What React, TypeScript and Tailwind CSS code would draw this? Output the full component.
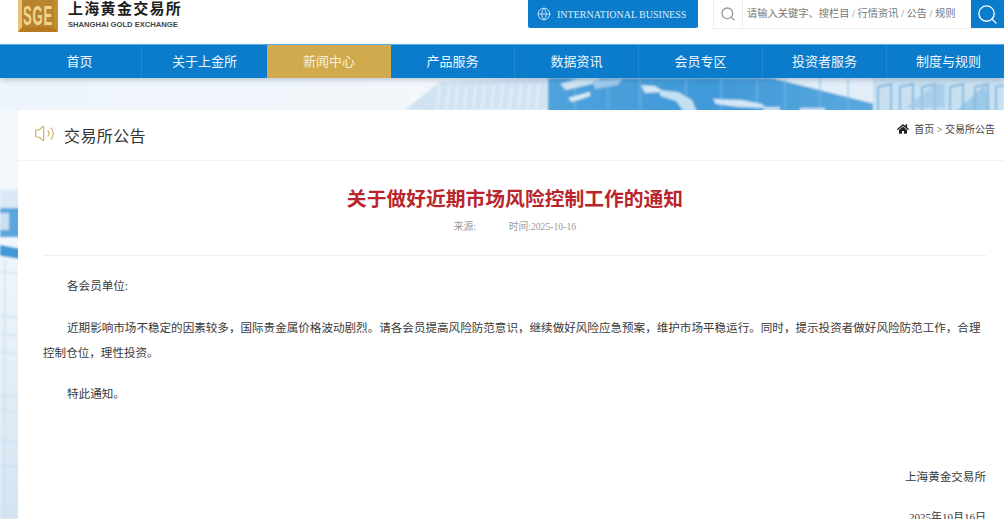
import { Globe, Search, Volume2 } from "lucide-react";
import { FaHome } from "react-icons/fa";

const navItems = ["首页", "关于上金所", "新闻中心", "产品服务", "数据资讯", "会员专区", "投资者服务", "制度与规则"];
const serif = "font-['Liberation_Serif','Noto_Sans_CJK_SC',serif]";
const bodyText =
  "近期影响市场不稳定的因素较多\uFF0C国际贵金属价格波动剧烈\u3002请各会员提高风险防范意识\uFF0C继续做好风险应急预案\uFF0C维护市场平稳运行\u3002同时\uFF0C提示投资者做好风险防范工作\uFF0C合理控制仓位\uFF0C理性投资\u3002";

function Backdrop() {
  const facade = [];
  for (let x = 440; x < 548; x += 9) facade.push(<line key={`v${x}`} x1={x} y1={85} x2={x - 3} y2={110} stroke="#e4f0f9" strokeWidth="2" />);
  for (let y = 84; y < 110; y += 6) facade.push(<line key={`h${y}`} x1={425} y1={y + 3} x2={548} y2={y} stroke="#dbe9f5" strokeWidth="1" />);
  const mullions = [575, 608, 640, 686, 721, 757, 785, 820, 848];
  const frames = [878, 900, 922, 950, 975, 996];
  return (
    <svg className="absolute inset-0" width="1004" height="519" viewBox="0 0 1004 519" aria-hidden="true">
      <defs>
        <linearGradient id="pg" x1="0" x2="1" y1="0" y2="0">
          <stop offset="0" stopColor="#edf4fb" />
          <stop offset="0.42" stopColor="#f3f7fc" />
          <stop offset="1" stopColor="#e6f0f8" />
        </linearGradient>
        <linearGradient id="glass" x1="0" x2="1" y1="0" y2="0">
          <stop offset="0" stopColor="#4fa3dc" />
          <stop offset="0.5" stopColor="#3f99d8" />
          <stop offset="1" stopColor="#5ba9de" />
        </linearGradient>
        <linearGradient id="side" x1="0" x2="0" y1="0" y2="1">
          <stop offset="0" stopColor="#f0f6fb" />
          <stop offset="1" stopColor="#d3e4f2" />
        </linearGradient>
        <filter id="soft" x="-2%" y="-10%" width="104%" height="120%">
          <feGaussianBlur stdDeviation="0.8" />
        </filter>
      </defs>
      <rect width="1004" height="519" fill="#eef4fb" />
      <rect y="78" width="1004" height="32" fill="url(#pg)" />
      <g filter="url(#soft)">
        <polygon points="405,110 440,82 548,78 548,110" fill="#cfe2f2" />
        {facade}
        <rect x="548" y="78" width="325" height="34" fill="url(#glass)" />
        <polygon points="764,76 875,76 875,104" fill="#e3eff8" />
        {mullions.map((x) => (
          <line key={x} x1={x} y1={78} x2={x} y2={112} stroke="#7dbde7" strokeWidth="1" />
        ))}
        <polygon points="560,84 578,79 600,78 596,83 566,90" fill="#cfe5f5" />
        <polygon points="592,80 622,79 618,85 595,89" fill="#9fcbeb" />
        <polygon points="568,98 590,92 590,96 572,102" fill="#dcecf8" />
        <polygon points="641,85 655,86 664,92 645,93" fill="#d3e7f6" />
        <polygon points="660,90 678,92 692,100 697,112 684,112 676,101 660,96" fill="#c3dff3" />
        <polygon points="713,99 742,100 762,104 766,108 738,107 716,104" fill="#d3e7f6" />
        <rect x="764" y="107" width="16" height="5" fill="#c3dff3" />
        <rect x="800" y="108" width="25" height="4" fill="#c9e2f4" />
        <rect x="873" y="78" width="131" height="34" fill="#c9e0f1" />
        {frames.map((x) => (
          <path key={x} d={`M${x} 112V87l13-3v28`} fill="none" stroke="#4f9fd6" strokeWidth="1.5" opacity="0.8" />
        ))}
        <polygon points="905,108 935,84 945,84 945,108" fill="#9cc8e8" opacity="0.7" />
        <polygon points="955,112 985,85 990,112" fill="#7fb9e2" opacity="0.6" />
      </g>
      <rect y="110" width="18" height="409" fill="#f2f7fc" />
      <g filter="url(#soft)">
        <rect y="190" width="20" height="18" fill="#dbe9f6" />
        <rect y="208" width="20" height="29" fill="#5aa6dd" />
        <rect y="213" width="9" height="17" fill="#c9e0f2" />
        <polygon points="0,245 20,249 20,259 0,256" fill="#419ad7" />
        <polygon points="0,256 20,260 20,519 0,519" fill="url(#side)" />
        <line x1="5" y1="260" x2="5" y2="519" stroke="#c9deef" strokeWidth="1.2" />
        {[272, 316, 334, 352, 395, 410, 440, 465].map((y) => (
          <line key={y} x1="0" y1={y} x2="20" y2={y + 2} stroke="#c5dbec" strokeWidth="1" />
        ))}
      </g>
    </svg>
  );
}

function Logo() {
  return (
    <svg width="40" height="32" viewBox="0 0 40 32" className="shrink-0" aria-label="SGE">
      <rect width="40" height="32" fill="#d9aa4c" />
      <polygon points="0,32 4,27 36,27 40,32" fill="#b87a1f" />
      <polygon points="40,0 36,0 36,27 40,32" fill="#c48d30" />
      <polygon points="0,0 4,0 4,27 0,32" fill="#e7c377" />
      <rect x="4" y="0" width="32" height="27" fill="#b98430" />
      <g transform="translate(20 25) scale(0.82 1.7)">
        <text x="0" y="0" textAnchor="middle" fontFamily="Liberation Sans" fontSize="16" fontWeight="700" fill="#f0d68e" letterSpacing="1">
          SGE
        </text>
      </g>
    </svg>
  );
}

export default function App() {
  return (
    <div className={`relative h-[519px] w-[1004px] overflow-hidden bg-[#eef4fb] ${serif}`}>
      <Backdrop />
      <div className="relative">
        <header className="flex h-[44px] items-start overflow-hidden bg-white pl-[18px]">
          <Logo />
          <div className="ml-[10px] flex w-[118px] flex-col">
            <div className="h-[19px] overflow-hidden whitespace-nowrap text-[15px] font-bold leading-[18px] tracking-[1.3px] text-[#1d1d1b]">上海黄金交易所</div>
            <div className="mt-[1px] whitespace-nowrap font-['Liberation_Sans',sans-serif] text-[7.6px] font-bold leading-[9px] text-[#444]">SHANGHAI GOLD EXCHANGE</div>
          </div>
          <div className="ml-[342px] flex h-[28px] w-[170px] items-center rounded-b-[2px] bg-[#0a7ccb] pl-[9px] text-white">
            <Globe size={14} strokeWidth={1.5} className="text-[#d4e9f7]" />
            <span className="ml-[6px] whitespace-nowrap text-[10px] text-[#dcedf8]">INTERNATIONAL BUSINESS</span>
          </div>
          <div className="ml-[15px] flex h-[29px] flex-1 border-b border-l border-[#eeeeee]">
            <div className="flex w-[29px] items-center justify-center border-r border-[#eeeeee]">
              <Search size={16} strokeWidth={2} className="text-[#9a9a9a]" />
            </div>
            <div className="flex-1 whitespace-nowrap pl-[4px] text-[10.25px] leading-[28px] text-[#777]">请输入关键字、搜栏目 / 行情资讯 / 公告 / 规则</div>
            <div className="flex w-[33px] items-center justify-center bg-[#0a7ccb]">
              <Search size={23} strokeWidth={1.4} className="text-white" />
            </div>
          </div>
        </header>

        <nav className="flex h-[34px] overflow-hidden border-t border-[#57aee8] bg-[#0a7ccb] pl-[18px] shadow-[0_2px_5px_rgba(60,90,120,0.3)]">
          {navItems.map((item) => (
            <div
              key={item}
              className={
                item === "新闻中心"
                  ? "flex w-[124px] shrink-0 items-center justify-center bg-[#d0aa4c] text-[13px] text-[#f8f0dc]"
                  : item === "关于上金所"
                    ? "flex w-[125px] shrink-0 items-center justify-center text-[13px] text-[#eef7fd]"
                    : "flex w-[124px] shrink-0 items-center justify-center border-r border-[#1f88d0] text-[13px] text-[#eef7fd]"
              }
            >
              {item}
            </div>
          ))}
        </nav>

        <main className="ml-[18px] mt-[32px] bg-white pb-[20px]">
          <div className="flex h-[51px] items-center border-b border-[#f2f2f2]">
            <Volume2 size={21} strokeWidth={1.4} className="ml-[16px] -translate-y-[2px] text-[#d2af6c]" />
            <h1 className="ml-[9px] pt-[3px] text-[16px] leading-[50px] tracking-[0.4px] text-[#333]">交易所公告</h1>
            <div className="ml-auto mr-[9px] flex -translate-y-[6px] items-center text-[10px] text-[#444]">
              <FaHome size={12} className="mr-[5px] text-[#222]" />
              首页 &gt; 交易所公告
            </div>
          </div>

          <div className="ml-[26px] mr-[18px] border-b border-[#eeeeee] pb-[21px] pt-[25px] text-center">
            <h2 className="text-[19.8px] font-bold leading-[26px] text-[#b9252b]">关于做好近期市场风险控制工作的通知</h2>
            <div className="mt-[8px] flex justify-center text-[9.7px] leading-[14px] text-[#999]">
              <span className="w-[55px] text-left">来源:</span>
              <span>时间:2025-10-16</span>
            </div>
          </div>

          <article className="ml-[25px] mr-[18px] text-[11.57px] leading-[25px] text-[#3a3a3a]">
            <p className="mt-[18px] indent-[24px]">各会员单位:</p>
            <p className="mt-[17px] indent-[24px]">{bodyText}</p>
            <p className="mt-[16px] indent-[24px]">特此通知。</p>
            <p className="mt-[58px] text-right">上海黄金交易所</p>
            <p className="mt-[15px] text-right text-[11px]">2025年10月16日</p>
          </article>
        </main>
      </div>
    </div>
  );
}
